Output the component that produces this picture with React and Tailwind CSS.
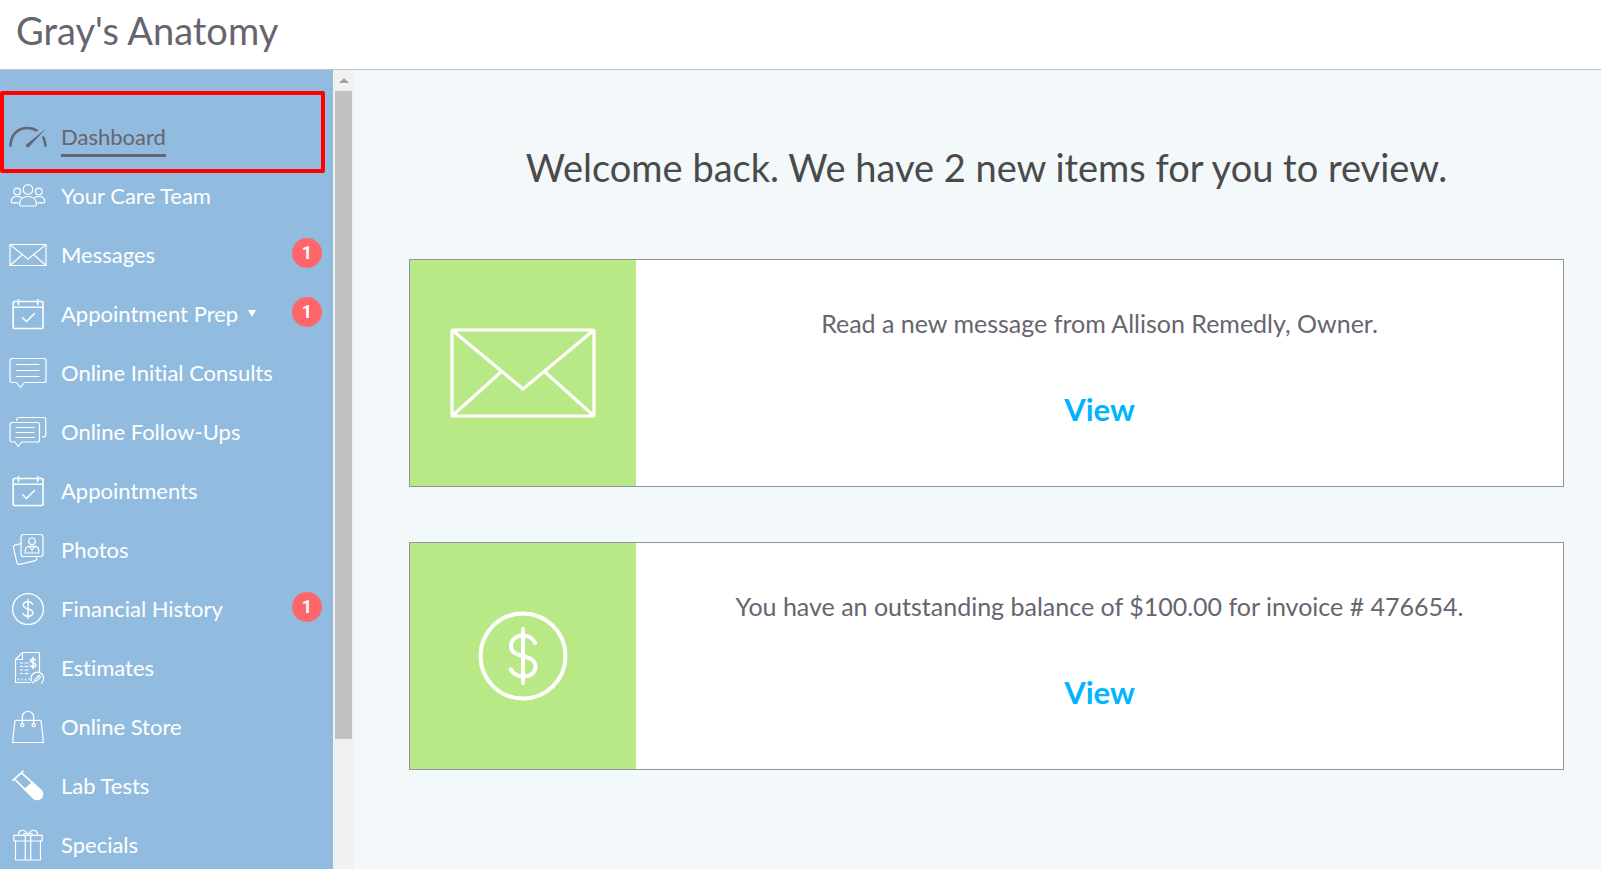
import clsx from 'clsx'

function Icon({ children, strokeWidth = 1.2 }) {
  return (
    <svg
      viewBox="0 0 38 34"
      className="w-[38px] h-[34px] shrink-0"
      fill="none"
      stroke="currentColor"
      strokeWidth={strokeWidth}
      strokeLinecap="round"
      strokeLinejoin="round"
      aria-hidden="true"
    >
      {children}
    </svg>
  )
}

function GaugeIcon() {
  return (
    <Icon strokeWidth={2.6}>
      <path d="M1.5 25.5C1.8 14.5 9 8 18.2 8c3.6 0 6.6.7 9.3 2.3" />
      <path d="M34.4 17.5c1 2.3 1.8 5 2 8" />
      <path d="M37.4 8.200 17.400 24.500a1.700 1.700 0 0 0 2.400 2.400Z" fill="currentColor" stroke="none" />
    </Icon>
  )
}

function TeamIcon() {
  return (
    <Icon>
      <circle cx="19" cy="10.5" r="4.8" />
      <path d="M10.5 25.5c0-5 3.3-8 8.5-8s8.5 3 8.5 8c0 1-.5 1.5-1.5 1.5H12c-1 0-1.5-.5-1.5-1.5Z" />
      <circle cx="8.2" cy="12.5" r="3.3" />
      <circle cx="29.8" cy="12.5" r="3.3" />
      <path d="M9 23.8H3.4c-.8 0-1.2-.4-1.2-1.2 0-3.3 2.5-5.1 6-5.1 1.6 0 2.9.3 4 1" />
      <path d="M29 23.8h5.6c.8 0 1.2-.4 1.2-1.2 0-3.3-2.5-5.1-6-5.1-1.6 0-2.9.3-4 1" />
    </Icon>
  )
}

function MailIcon() {
  return (
    <Icon>
      <rect x="1" y="6.5" width="36" height="21" />
      <path d="m1 6.5 18 14.5L37 6.5M1 27.5l12.5-11M37 27.5l-12.5-11" />
    </Icon>
  )
}

function CalendarIcon() {
  return (
    <Icon strokeWidth={1.6}>
      <rect x="4.2" y="4.5" width="29.8" height="27" rx="1.2" />
      <path d="M4.2 10.3H34M9.5 2.5v5M28.7 2.5v5" />
      <path d="m13.7 20.8 3.8 3.7 8-8" />
    </Icon>
  )
}

function ChatIcon() {
  return (
    <Icon>
      <path d="M3 2.5h32a2 2 0 0 1 2 2v20a2 2 0 0 1-2 2H15.500l-4 5-4-5H3a2 2 0 0 1-2-2v-20a2 2 0 0 1 2-2Z" />
      <path d="M7.5 8.5H30M7.5 14.5H30M7.5 20.5H30" />
    </Icon>
  )
}

function ChatsIcon() {
  return (
    <Icon>
      <path d="M3 7.500h25.500a2 2 0 0 1 2 2V25a2 2 0 0 1-2 2H12.700l-3.400 4.500L6 27H3a2 2 0 0 1-2-2V9.500a2 2 0 0 1 2-2Z" />
      <path d="M7 12.5h18M7 17.5h18M7 22.5h18" />
      <path d="M7.700 5.500v-1a2 2 0 0 1 2-2H35a1.800 1.800 0 0 1 1.800 1.800V20a1.800 1.800 0 0 1-1.800 1.800h-1.500" />
    </Icon>
  )
}

function PhotosIcon() {
  return (
    <Icon>
      <rect x="12" y="1.5" width="22" height="22" rx="2.5" />
      <path d="M12 10.700 6 12.100a2 2 0 0 0-1.500 2.500L8 29.800a2 2 0 0 0 2.400 1.500l15.300-3.500a2.500 2.500 0 0 0 2-2.400v-1.900" />
      <circle cx="23" cy="8.3" r="3.3" />
      <path d="M16.300 20v-2.500c0-2.800 1.800-4.200 4.200-4.200h5c2.400 0 4.200 1.400 4.200 4.200V20ZM20.500 13.500l2.500 3.300 2.500-3.300M23 16.800v1" />
    </Icon>
  )
}

function DollarIcon() {
  return (
    <Icon strokeWidth={1.4}>
      <circle cx="19" cy="17" r="15.4" />
      <path d="M19 7.5v19" />
      <path d="M23.600 12.300c-.8-1.600-2.500-2.600-4.600-2.600-2.800 0-4.700 1.400-4.700 3.600 0 4.900 9.600 2.400 9.600 7.300 0 2.300-2 3.700-4.900 3.700-2.400 0-4.200-1-5-2.700" />
    </Icon>
  )
}

function EstimatesIcon() {
  return (
    <Icon>
      <path d="M21 31.500H6.500V8.500l7-7h17v19" />
      <path d="M6.500 8.500h7v-7" />
      <path d="M11.500 12h2M16 12h3M11.500 15.500h2M16 15.500h3M11.500 19h2M16 19h3M11.500 22.500h2M16 22.500h3" />
      <path d="M9 28.5h12" strokeWidth="2" strokeDasharray="1 2.5" strokeLinecap="butt" />
      <path d="M24 6.500v11M26.400 9.300c-.5-.9-1.300-1.300-2.400-1.300-1.500 0-2.500.7-2.500 1.900 0 2.600 5.200 1.300 5.200 4 0 1.300-1.100 2.100-2.700 2.100-1.300 0-2.200-.5-2.700-1.500" strokeWidth="1.5" />
      <path d="M24 32a6.300 6.300 0 1 1 8.600 0M25.500 30.500l.6-2.200 3.800-3.800 1.500 1.500-3.800 3.800Z" />
    </Icon>
  )
}

function BagIcon() {
  return (
    <Icon>
      <path d="M6 10.3h26l2.5 22.2h-31Z" />
      <path d="M13.3 14V7a5.7 5.7 0 0 1 11.4 0v7" />
      <circle cx="13.3" cy="15" r="1.6" />
      <circle cx="24.7" cy="15" r="1.6" />
    </Icon>
  )
}

function TubeIcon() {
  return (
    <Icon strokeWidth={1.7}>
      <path d="M4 11.300 13.800 2.300M5.500 10l19 18.800a5.200 5.200 0 0 0 7.500-7.200L12.300 3.700" strokeLinecap="square" />
      <path d="m16 20.300 7.500-6.600 8.500 7.900a5.200 5.200 0 0 1-7.500 7.200Z" fill="currentColor" />
    </Icon>
  )
}

function GiftIcon() {
  return (
    <Icon>
      <rect x="4.8" y="7.3" width="28.4" height="5.7" />
      <path d="M6.5 13v19h25V13M16.3 7.3V32M21.7 7.3V32" />
      <path d="M19 7c-1.500-3.300-3.700-5-6.300-4.700-3 .3-4 3-2.500 5M19 7c1.500-3.300 3.700-5 6.300-4.700 3 .3 4 3 2.500 5" />
      <path d="M14 7c.8-1.500 1.800-2 3-1.300M24 7c-.8-1.500-1.800-2-3-1.300" />
    </Icon>
  )
}

const navItems = [
  { label: 'Dashboard', icon: GaugeIcon, active: true },
  { label: 'Your Care Team', icon: TeamIcon },
  { label: 'Messages', icon: MailIcon, count: 1 },
  { label: 'Appointment Prep', icon: CalendarIcon, count: 1, submenu: true },
  { label: 'Online Initial Consults', icon: ChatIcon },
  { label: 'Online Follow-Ups', icon: ChatsIcon },
  { label: 'Appointments', icon: CalendarIcon },
  { label: 'Photos', icon: PhotosIcon },
  { label: 'Financial History', icon: DollarIcon, count: 1 },
  { label: 'Estimates', icon: EstimatesIcon },
  { label: 'Online Store', icon: BagIcon },
  { label: 'Lab Tests', icon: TubeIcon },
  { label: 'Specials', icon: GiftIcon },
]

function NavItem({ item }) {
  const ItemIcon = item.icon
  return (
    <li className="relative">
      {item.active && (
        <span className="absolute left-0 right-2 -top-4 -bottom-[7px] border-4 border-[#ff0000] rounded-xs" />
      )}
      <a
        href="#"
        className={clsx(
          'flex items-center h-[59px] pl-[9px] pr-[11px] gap-[14px]',
          item.active ? 'text-[#66656f]' : 'text-white'
        )}
      >
        <ItemIcon />
        <span className={clsx('text-[22px] leading-7', item.active && 'border-b-3 border-[#66656f] mt-[6px] pb-[3px]')}>
          {item.label}
        </span>
        {item.submenu && (
          <svg viewBox="0 0 8 7" className="w-2 h-[7px] -ml-1" fill="currentColor" aria-hidden="true">
            <path d="M0 0h8L4 7Z" />
          </svg>
        )}
        {item.count && (
          <span className="ml-auto mb-1 flex items-center justify-center size-[30px] rounded-full bg-[#ff666b] text-white text-lg font-bold font-['Roboto',sans-serif]">
            {item.count}
          </span>
        )}
      </a>
    </li>
  )
}

function Sidebar() {
  return (
    <div className="flex shrink-0 overflow-hidden">
      <nav className="w-[333px] bg-[#92bcdf] pt-[37px]">
        <ul>
          {navItems.map((item) => (
            <NavItem key={item.label} item={item} />
          ))}
        </ul>
      </nav>
      <div className="w-[21px] flex flex-col items-center bg-[#f1f1f1]">
        <div className="h-[21px] shrink-0 flex items-center justify-center">
          <svg viewBox="0 0 10 5" className="w-[10px] h-[5px]" fill="#a3a3a3" aria-hidden="true">
            <path d="M5 0 10 5H0Z" />
          </svg>
        </div>
        <div className="w-[17px] flex-1">
          <div className="h-5/6 bg-[#c1c1c1]" />
        </div>
      </div>
    </div>
  )
}

function ReviewCard({ icon, text }) {
  return (
    <section className="flex bg-white border border-[#909598]">
      <div className="size-[226px] shrink-0 flex items-center justify-center bg-[#b9e986] text-white">{icon}</div>
      <div className="flex-1 flex flex-col items-center pt-[47px] text-center">
        <p className="text-[25px] leading-8 text-[#66656f]">{text}</p>
        <a href="#" className="mt-[50px] text-[31px] leading-10 font-bold text-[#00b4ff]">
          View
        </a>
      </div>
    </section>
  )
}

export default function App() {
  return (
    <div className="h-screen flex flex-col font-['Lato',sans-serif] [font-variant-ligatures:none]">
      <header className="h-[70px] shrink-0 px-4 bg-white border-b border-[#bfc3c6]">
        <h1 className="pt-[2px] text-[38px] leading-14 text-[#66656f]">Gray's Anatomy</h1>
      </header>
      <div className="flex-1 min-h-0 flex">
        <Sidebar />
        <main className="flex-1 overflow-hidden bg-[#f3f8fb] pl-[55px] pr-[37px] pt-[69px]">
          <h2 className="text-[38px] leading-14 text-center text-[#4a4a4a]">
            Welcome back. We have 2 new items for you to review.
          </h2>
          <div className="mt-16 flex flex-col gap-[55px]">
            <ReviewCard
              text="Read a new message from Allison Remedly, Owner."
              icon={
                <svg viewBox="0 0 146 90" className="w-[146px] h-[90px]" fill="none" stroke="currentColor" strokeWidth="3.2" strokeLinejoin="round" aria-hidden="true">
                  <rect x="2" y="2" width="142" height="86" rx="1" />
                  <path d="m2 2 71 59 71-59M2 88l49-44M144 88 95 44" />
                </svg>
              }
            />
            <ReviewCard
              text="You have an outstanding balance of $100.00 for invoice # 476654."
              icon={
                <svg viewBox="0 0 90 90" className="size-[90px]" fill="none" stroke="currentColor" strokeWidth="4" strokeLinecap="round" aria-hidden="true">
                  <circle cx="45" cy="45" r="42.5" />
                  <path d="M45 18v54" />
                  <path d="M57.200 32C54.700 27.300 50.200 24.500 45 24.500c-7.200 0-12 4.300-12 10.500 0 13.500 24.500 7 24.500 20.500 0 6-5 10-12.500 10-5.300 0-9.800-2.600-12.300-7.200" />
                </svg>
              }
            />
          </div>
        </main>
      </div>
    </div>
  )
}
